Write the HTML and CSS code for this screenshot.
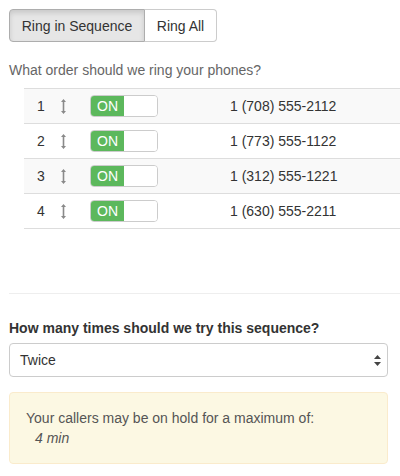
FILE: index.html
```html
<!DOCTYPE html>
<html lang="en">
<head>
  <meta charset="UTF-8" />
  <title>Ring Settings</title>
  <link rel="stylesheet" href="styles.css">
</head>
<body>
  <div class="btn-group">
    <button class="btn active">Ring in Sequence</button>
    <button class="btn">Ring All</button>
  </div>

  <p class="help">What order should we ring your phones?</p>

  <table class="phones">
    <colgroup>
      <col class="c-num"><col class="c-drag"><col class="c-sw"><col>
    </colgroup>
    <tr class="odd">
      <td class="num">1</td>
      <td class="drag"><svg width="7" height="17" viewBox="0 0 7 17"><path d="M3.5 1 L6 4 H4.3 V13 H6 L3.5 16 L1 13 H2.7 V4 H1 Z" fill="#8a8a8a"/></svg></td>
      <td class="sw"><span class="toggle"><span class="on">ON</span><span class="off"></span></span></td>
      <td class="phone">1 (708) 555-2112</td>
    </tr>
    <tr>
      <td class="num">2</td>
      <td class="drag"><svg width="7" height="17" viewBox="0 0 7 17"><path d="M3.5 1 L6 4 H4.3 V13 H6 L3.5 16 L1 13 H2.7 V4 H1 Z" fill="#8a8a8a"/></svg></td>
      <td class="sw"><span class="toggle"><span class="on">ON</span><span class="off"></span></span></td>
      <td class="phone">1 (773) 555-1122</td>
    </tr>
    <tr class="odd">
      <td class="num">3</td>
      <td class="drag"><svg width="7" height="17" viewBox="0 0 7 17"><path d="M3.5 1 L6 4 H4.3 V13 H6 L3.5 16 L1 13 H2.7 V4 H1 Z" fill="#8a8a8a"/></svg></td>
      <td class="sw"><span class="toggle"><span class="on">ON</span><span class="off"></span></span></td>
      <td class="phone">1 (312) 555-1221</td>
    </tr>
    <tr>
      <td class="num">4</td>
      <td class="drag"><svg width="7" height="17" viewBox="0 0 7 17"><path d="M3.5 1 L6 4 H4.3 V13 H6 L3.5 16 L1 13 H2.7 V4 H1 Z" fill="#8a8a8a"/></svg></td>
      <td class="sw"><span class="toggle"><span class="on">ON</span><span class="off"></span></span></td>
      <td class="phone">1 (630) 555-2211</td>
    </tr>
  </table>

  <hr class="divider">

  <label class="label">How many times should we try this sequence?</label>
  <div class="select">
    <span>Twice</span>
    <svg class="arrows" width="7" height="11" viewBox="0 0 7 11"><path d="M3.5 0 L7 4 H0 Z M3.5 11 L7 7 H0 Z" fill="#444"/></svg>
  </div>

  <div class="alert">
    <div>Your callers may be on hold for a maximum of:</div>
    <div class="time">4 min</div>
  </div>
</body>
</html>
```

FILE: styles.css
```css
body {
  font-family: "Liberation Sans", Arial, sans-serif;
  font-size: 14px;
  line-height: 20px;
  color: #333;
  background: #fff;
  margin: 0;
  padding: 9px 12px 0 9px;
}
.btn-group {
  display: flex;
}
.btn {
  font-family: inherit;
  font-size: 14px;
  color: #333;
  background: #fff;
  border: 1px solid #ccc;
  height: 33px;
  padding: 0;
  margin: 0;
  white-space: nowrap;
  text-align: center;
}
.btn:first-child {
  border-radius: 4px 0 0 4px;
  width: 136px;
}
.btn:last-child {
  border-radius: 0 4px 4px 0;
  border-left: none;
  width: 72px;
}
.btn.active {
  background: #e6e6e6;
  border-color: #adadad;
  box-shadow: inset 0 3px 5px rgba(0,0,0,0.125);
}
.help {
  color: #666;
  margin: 18px 0 8px;
}
.phones {
  border-collapse: collapse;
  table-layout: fixed;
  margin: 0 -12px 0 15px;
  width: 376px;
}
.c-num { width: 36px; }
.c-drag { width: 30px; }
.c-sw { width: 140px; }
.phones td {
  border-top: 1px solid #ddd;
  border-bottom: 1px solid #ddd;
  height: 34px;
  padding: 0;
  vertical-align: middle;
}
.phones tr.odd td {
  background: #f9f9f9;
}
.phones td.num {
  padding-left: 13px;
}
.drag svg {
  display: block;
}
.toggle {
  display: flex;
  width: 66px;
  height: 20px;
  border: 1px solid #ccc;
  border-radius: 4px;
  overflow: hidden;
}
.on {
  width: 33px;
  background: #5cb85c;
  color: #fff;
  font-size: 14px;
  line-height: 20px;
  text-align: center;
}
.off {
  flex: 1;
  background: #fff;
}
.phone {
  color: #333;
}
.divider {
  border: 0;
  border-top: 1px solid #eee;
  margin: 64px -12px 0 0;
}
.label {
  display: block;
  font-weight: bold;
  margin-top: 24px;
}
.select {
  display: flex;
  align-items: center;
  justify-content: space-between;
  height: 32px;
  margin-top: 5px;
  padding: 0 6px 0 10px;
  border: 1px solid #ccc;
  border-radius: 4px;
  background: #fff;
}
.alert {
  margin-top: 15px;
  padding: 15px 16px 15px;
  background: #fcf8e3;
  border: 1px solid #faebcc;
  border-radius: 4px;
  color: #555;
}
.time {
  font-style: italic;
  padding-left: 9px;
}
```
